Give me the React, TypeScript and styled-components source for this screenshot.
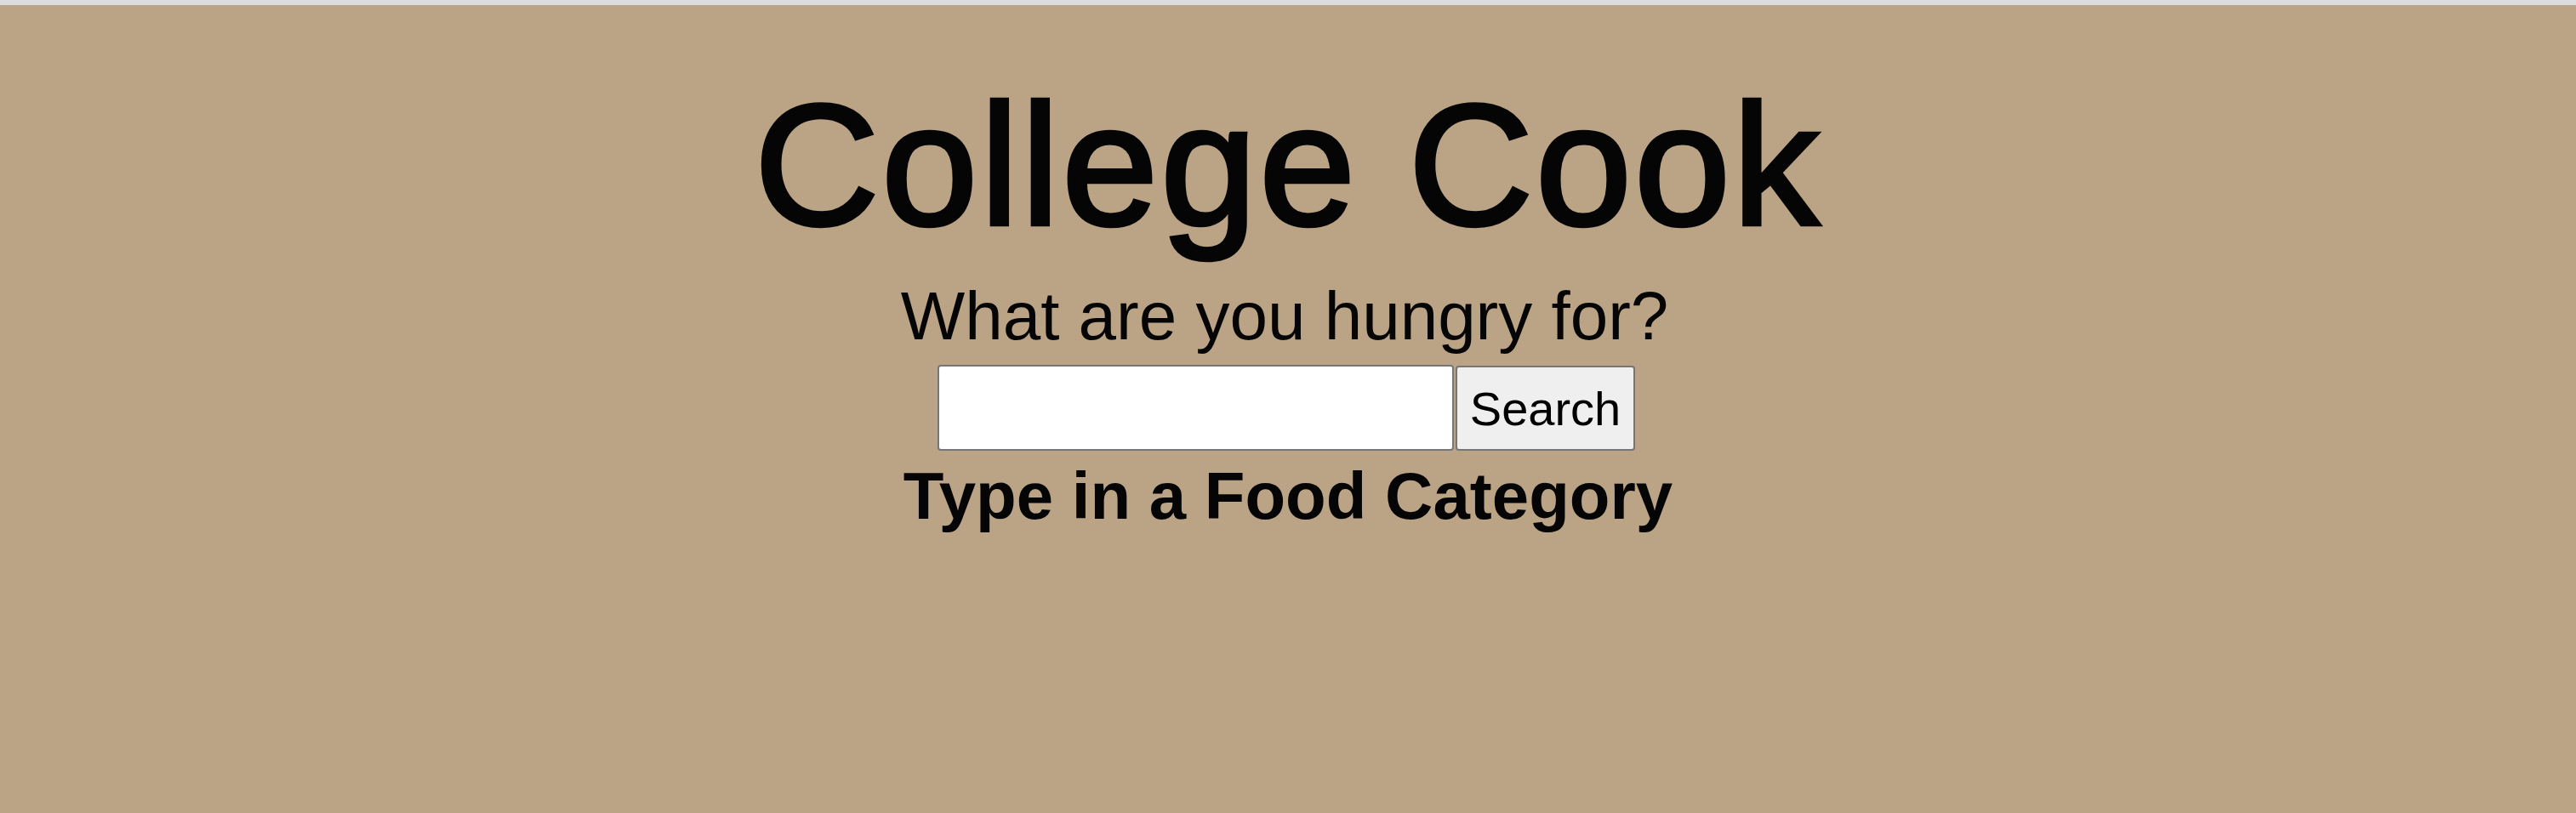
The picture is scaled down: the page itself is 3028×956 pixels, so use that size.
import React from "react";
import styled, { createGlobalStyle } from "styled-components";

const GlobalStyle = createGlobalStyle`
  html, body {
    margin: 0;
    padding: 0;
    background: #bba485;
  }
  body {
    font-family: "Liberation Sans", Arial, Helvetica, sans-serif;
    color: #050505;
  }
`;

const TopStrip = styled.div`
  height: 6px;
  background: #dcdcdc;
`;

const Page = styled.main`
  min-height: 950px;
  background: #bba485;
  display: flex;
  flex-direction: column;
  align-items: center;
  padding-top: 86px;
  box-sizing: border-box;
`;

const Title = styled.h1`
  margin: 0;
  font-size: 203px;
  line-height: 203px;
  font-weight: 400;
  letter-spacing: 3px;
  -webkit-text-stroke: 4.5px #050505;
  white-space: nowrap;
`;

const Subtitle = styled.p`
  margin: 37px 8px 0 0;
  font-size: 80px;
  line-height: 80px;
  font-weight: 400;
  white-space: nowrap;
`;

const SearchForm = styled.form`
  display: flex;
  align-items: flex-end;
  gap: 2px;
  margin-top: 17px;
  margin-right: 4px;
`;

const SearchInput = styled.input`
  width: 607px;
  height: 101px;
  box-sizing: border-box;
  border: 2px solid #767676;
  border-radius: 4px;
  background: #ffffff;
  padding: 0 8px;
  font-family: "Liberation Sans", Arial, sans-serif;
  font-size: 55px;
  outline: none;
`;

const SearchButton = styled.button`
  width: 211px;
  height: 100px;
  box-sizing: border-box;
  border: 2px solid #767676;
  border-radius: 4px;
  background: #efefef;
  color: #000;
  font-family: "Liberation Sans", Arial, sans-serif;
  font-size: 56px;
  padding: 0;
  cursor: pointer;
`;

const Hint = styled.h2`
  margin: 14px 0 0;
  font-size: 78px;
  line-height: 78px;
  font-weight: 700;
  white-space: nowrap;
`;

export default function App() {
  return (
    <>
      <GlobalStyle />
      <TopStrip />
      <Page>
        <Title>College Cook</Title>
        <Subtitle>What are you hungry for?</Subtitle>
        <SearchForm onSubmit={(e) => e.preventDefault()}>
          <SearchInput type="text" aria-label="Food category" />
          <SearchButton type="submit">Search</SearchButton>
        </SearchForm>
        <Hint>Type in a Food Category</Hint>
      </Page>
    </>
  );
}
